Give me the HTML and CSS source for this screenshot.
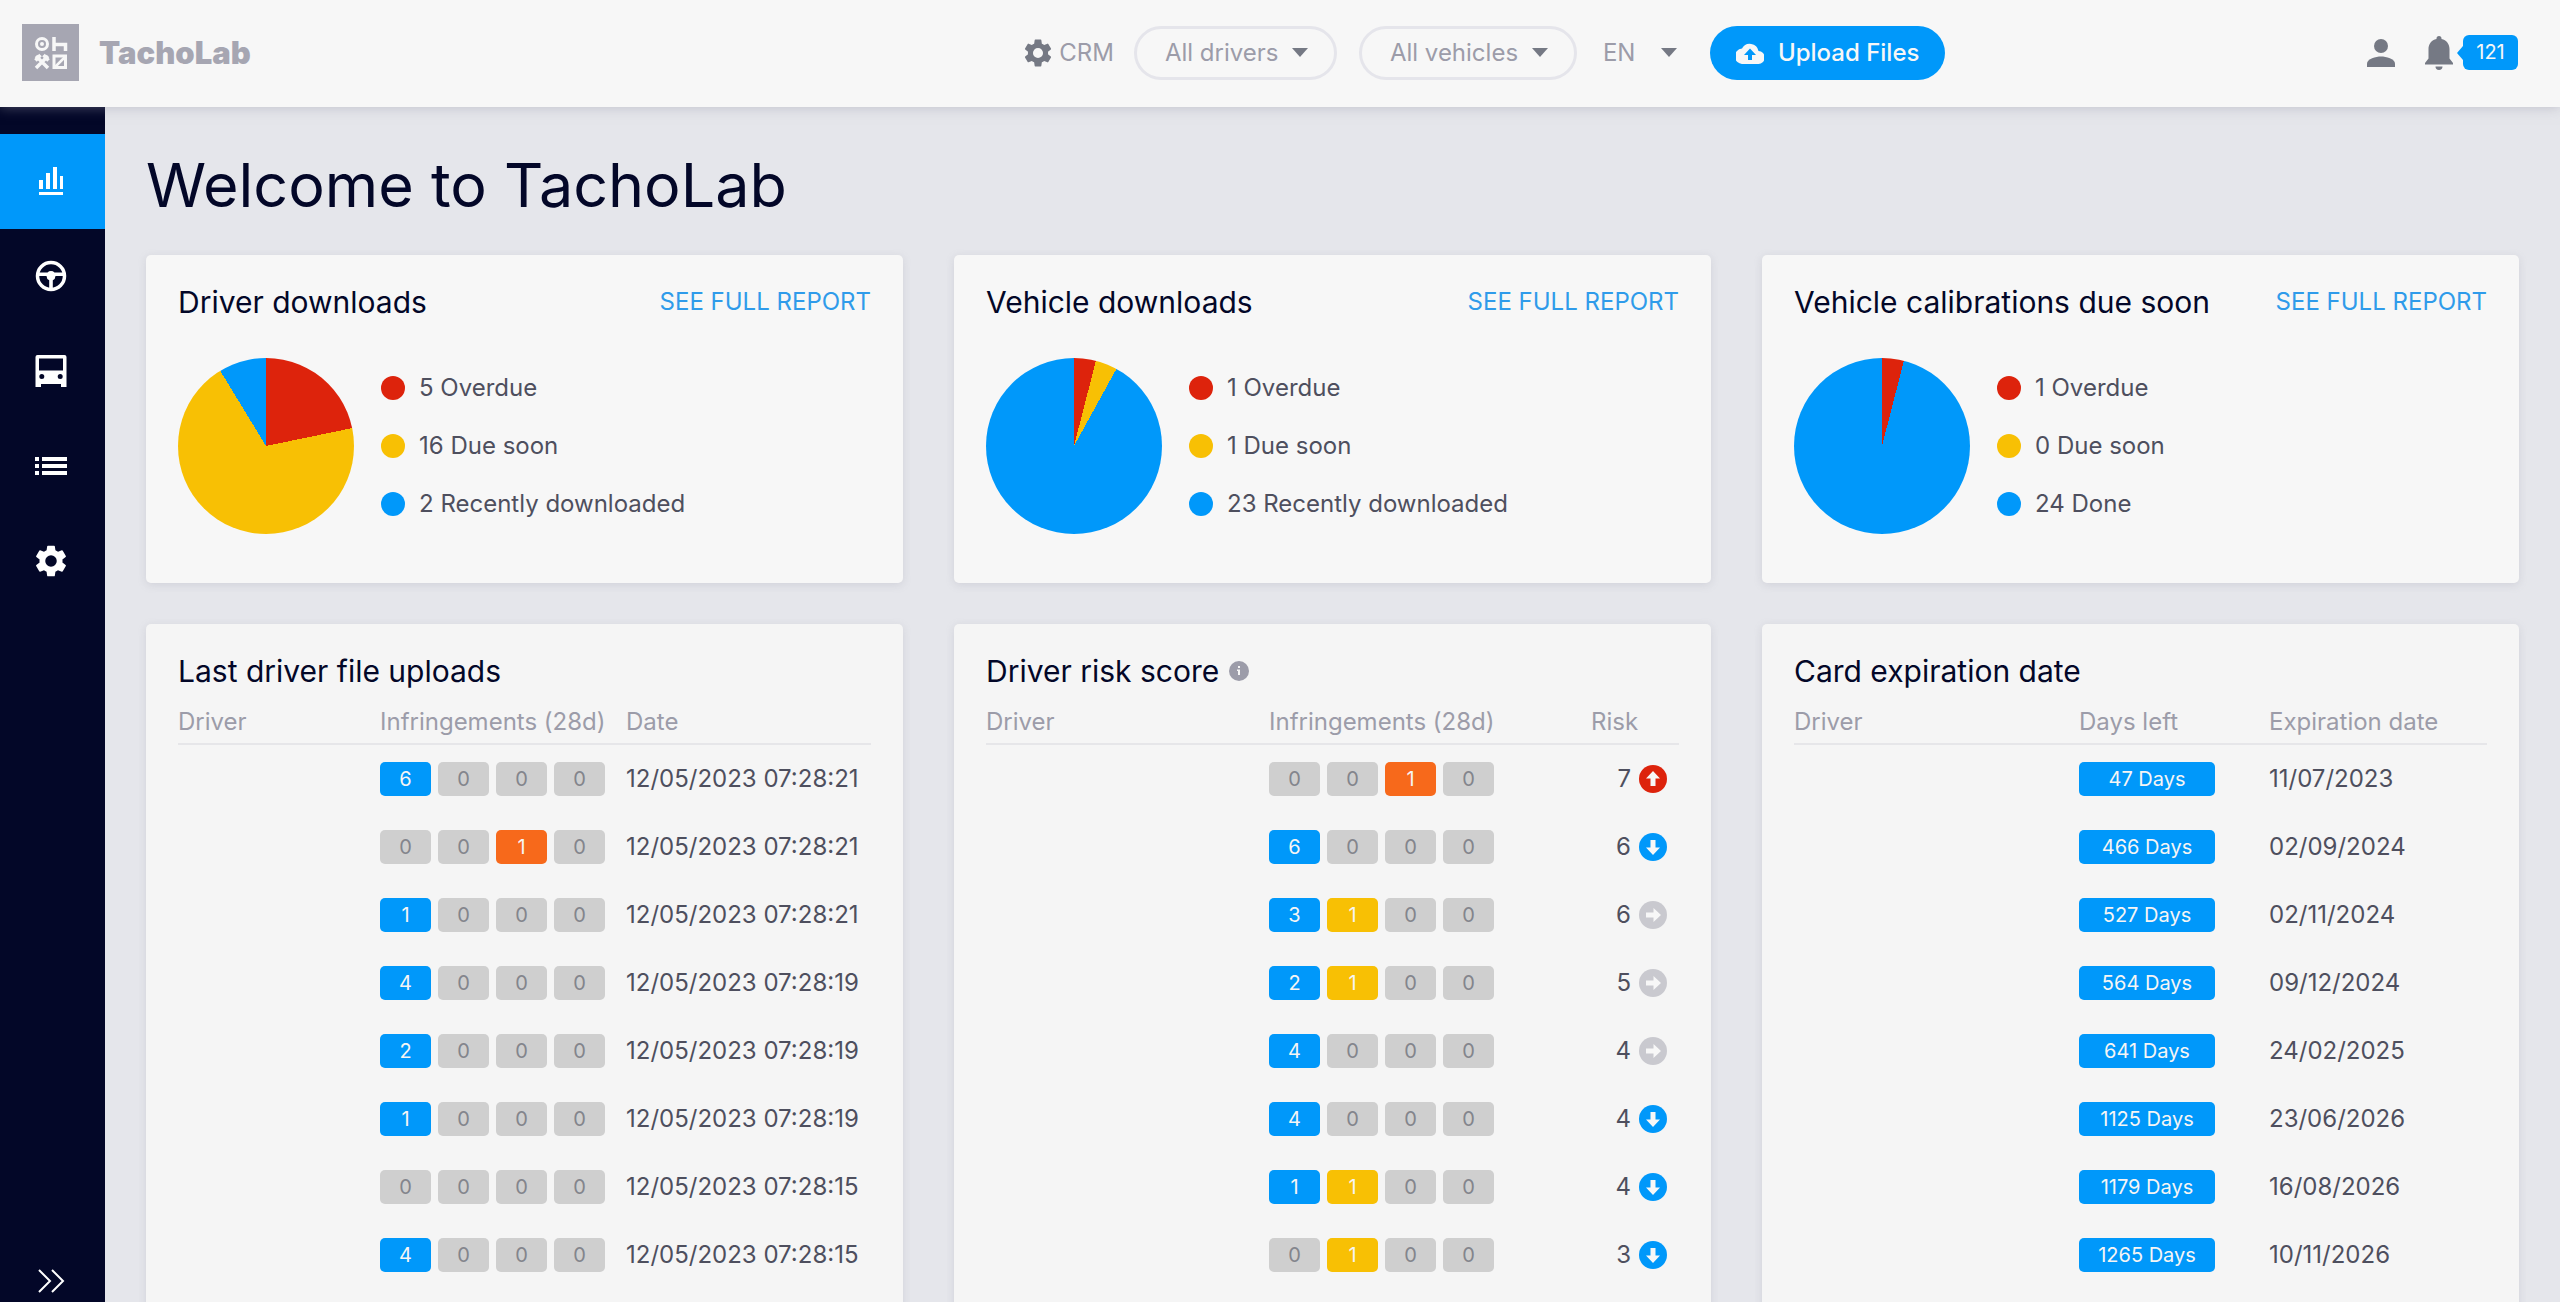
FILE: index.html
```html
<!DOCTYPE html>
<html lang="en">
<head>
<meta charset="utf-8">
<meta name="viewport" content="width=device-width, initial-scale=1">
<title>TachoLab</title>
<link rel="stylesheet" href="styles.css">
</head>
<body>
<svg class="sprite" aria-hidden="true">
  <symbol id="gear" viewBox="2 2 20 20"><path d="M19.14 12.94c.04-.3.06-.61.06-.94s-.02-.64-.07-.94l2.03-1.58a.49.49 0 0 0 .12-.61l-1.92-3.32a.49.49 0 0 0-.59-.22l-2.39.96a7 7 0 0 0-1.62-.94l-.36-2.54a.48.48 0 0 0-.48-.41h-3.84a.48.48 0 0 0-.47.41l-.36 2.54c-.59.24-1.13.57-1.62.94l-2.39-.96a.48.48 0 0 0-.59.22L2.74 8.87a.48.48 0 0 0 .12.61l2.03 1.58c-.05.3-.09.63-.09.94s.02.64.07.94l-2.03 1.58a.49.49 0 0 0-.12.61l1.92 3.32c.12.22.37.29.59.22l2.39-.96c.5.38 1.03.7 1.62.94l.36 2.54c.05.24.24.41.48.41h3.84c.24 0 .44-.17.47-.41l.36-2.54a7 7 0 0 0 1.62-.94l2.39.96c.22.08.47 0 .59-.22l1.92-3.32a.47.47 0 0 0-.12-.61zM12 15.6a3.6 3.6 0 1 1 0-7.2 3.6 3.6 0 0 1 0 7.2z"/></symbol>
  <symbol id="up" viewBox="0 0 28 28"><circle cx="14" cy="14" r="14"/><path fill="#f7f7f7" d="M14 6l7 7.500h-4.500V21h-5v-7.500H7z"/></symbol>
  <symbol id="down" viewBox="0 0 28 28"><circle cx="14" cy="14" r="14"/><path fill="#f7f7f7" d="M14 22l7-7.500h-4.500V7h-5v7.500H7z"/></symbol>
  <symbol id="same" viewBox="0 0 28 28"><circle cx="14" cy="14" r="14"/><path fill="#f7f7f7" d="M22 14l-7.500-7v4.500H7v5h7.500V21z"/></symbol>
</svg>

<header class="topbar">
  <a class="brand" href="#">
    <svg class="brand-mark" viewBox="0 0 57 57" aria-hidden="true">
      <rect width="57" height="57" fill="#a6a6b2"/>
      <g fill="none" stroke="#f7f7f7" stroke-width="3">
        <circle cx="20" cy="20" r="5.500"/>
        <path d="M32 13v14M32 20.500h11.500V27" stroke-width="3.500"/>
        <path d="M14 44l12-12M26 44L14 32M13.500 36.500l5-5.500M26.500 36.500l-5-5.500" stroke-width="3.500"/>
        <rect x="32" y="32" width="11.500" height="11.500"/>
        <path d="M33 43l10-10" stroke-width="2.500"/>
      </g>
      <circle cx="20" cy="20" r="2" fill="#f7f7f7"/>
    </svg>
    <span class="brand-name">TachoLab</span>
  </a>
  <nav class="tools" aria-label="Filters">
    <a class="crm" href="#"><svg class="crm-icon" aria-hidden="true"><use href="#gear"/></svg>CRM</a>
    <select class="filter filter-drivers" aria-label="Drivers"><option>All drivers</option></select>
    <select class="filter filter-vehicles" aria-label="Vehicles"><option>All vehicles</option></select>
    <select class="language" aria-label="Language"><option>EN</option></select>
    <button class="upload" type="button">
      <svg class="upload-icon" viewBox="0 0 28 22" aria-hidden="true"><path fill="#f7f7f7" d="M22.500 9A8.800 8.800 0 0 0 6 6.600 7.700 7.700 0 0 0 7 22h15a6.500 6.500 0 0 0 .5-13z"/><path fill="#0098fa" d="M14 6.500l6 6.500h-4v5h-4v-5H8z"/></svg>
      Upload Files
    </button>
  </nav>
  <div class="account">
    <a class="profile" href="#" aria-label="Profile"><svg class="profile-icon" viewBox="0 0 28 28" aria-hidden="true"><circle cx="14" cy="7" r="7"/><path d="M0 28v-3.500C0 20 9 17.500 14 17.500S28 20 28 24.500V28z"/></svg></a>
    <a class="alerts" href="#" aria-label="Notifications">
      <svg class="bell-icon" viewBox="0 0 28 34" aria-hidden="true"><path d="M14 0a2.500 2.500 0 0 1 2.500 2.500v.4C21.500 4 24.500 8 24.500 13v9.500L28 27v1.500H0V27l3.500-4.500V13c0-5 3-9 8-10.100v-.4A2.500 2.500 0 0 1 14 0z"/><path d="M10.500 30.500h7a3.500 3.500 0 0 1-7 0z"/></svg>
      <span class="alert-count">121</span>
    </a>
  </div>
</header>

<div class="shell">
  <nav class="sidebar" aria-label="Main">
    <a class="side-link active" href="#" aria-label="Dashboard"><svg viewBox="0 0 32 32"><path d="M4 15h4v9H4zM11 8h4v16h-4zM18 2h4v22h-4zM25 11h3v13h-3zM4 27h24v3H4z"/></svg></a>
    <a class="side-link" href="#" aria-label="Drivers"><svg viewBox="0 0 32 32"><circle cx="16" cy="16" r="13.500" fill="none" stroke="#fff" stroke-width="3.500"/><path d="M3 12.500h9.500a5 5 0 0 1 7 0H29V16h-8.500a5 5 0 0 1-2.700 4.300V29h-3.600v-8.700A5 5 0 0 1 11.500 16H3z"/></svg></a>
    <a class="side-link" href="#" aria-label="Vehicles"><svg viewBox="0 0 32 32"><path fill-rule="evenodd" d="M2.500 0h27a2 2 0 0 1 2 2v30h-5.500v-3H6v3H.500V2a2 2 0 0 1 2-2zM4 3.500v12h24v-12zM6.800 19a2.500 2.500 0 1 0 0 5 2.500 2.500 0 0 0 0-5zM25.200 19a2.500 2.500 0 1 0 0 5 2.500 2.500 0 0 0 0-5z"/></svg></a>
    <a class="side-link" href="#" aria-label="Lists"><svg viewBox="0 0 32 32"><path d="M0 7h4v4H0zM7 7h25v4H7zM0 14h4v4H0zM7 14h25v4H7zM0 21h4v4H0zM7 21h25v4H7z"/></svg></a>
    <a class="side-link" href="#" aria-label="Settings"><svg><use href="#gear"/></svg></a>
    <button class="expand" type="button" aria-label="Expand menu"><svg viewBox="0 0 28 24"><path d="M2 1l11 11L2 23M15 1l11 11-11 11" fill="none" stroke="#fff" stroke-width="2"/></svg></button>
  </nav>

  <main class="content">
    <h1>Welcome to TachoLab</h1>
    <div class="cards">
      <section class="card">
        <div class="card-head"><h2>Driver downloads</h2><a class="report" href="#">SEE FULL REPORT</a></div>
        <div class="summary">
          <div class="pie" style="--overdue: 21.74%; --due: 91.3%"></div>
          <ul class="legend"><li class="overdue">5 Overdue</li><li class="due">16 Due soon</li><li class="done">2 Recently downloaded</li></ul>
        </div>
      </section>
      <section class="card">
        <div class="card-head"><h2>Vehicle downloads</h2><a class="report" href="#">SEE FULL REPORT</a></div>
        <div class="summary">
          <div class="pie" style="--overdue: 4%; --due: 8%"></div>
          <ul class="legend"><li class="overdue">1 Overdue</li><li class="due">1 Due soon</li><li class="done">23 Recently downloaded</li></ul>
        </div>
      </section>
      <section class="card">
        <div class="card-head"><h2>Vehicle calibrations due soon</h2><a class="report" href="#">SEE FULL REPORT</a></div>
        <div class="summary">
          <div class="pie" style="--overdue: 4%; --due: 4%"></div>
          <ul class="legend"><li class="overdue">1 Overdue</li><li class="due">0 Due soon</li><li class="done">24 Done</li></ul>
        </div>
      </section>

      <section class="card table-card">
        <div class="card-head"><h2>Last driver file uploads</h2></div>
        <table class="uploads">
          <thead><tr><th>Driver</th><th>Infringements (28d)</th><th>Date</th></tr></thead>
          <tbody>
            <tr><td></td><td><div class="chips"><span class="chip blue">6</span><span class="chip">0</span><span class="chip">0</span><span class="chip">0</span></div></td><td>12/05/2023 07:28:21</td></tr>
            <tr><td></td><td><div class="chips"><span class="chip">0</span><span class="chip">0</span><span class="chip orange">1</span><span class="chip">0</span></div></td><td>12/05/2023 07:28:21</td></tr>
            <tr><td></td><td><div class="chips"><span class="chip blue">1</span><span class="chip">0</span><span class="chip">0</span><span class="chip">0</span></div></td><td>12/05/2023 07:28:21</td></tr>
            <tr><td></td><td><div class="chips"><span class="chip blue">4</span><span class="chip">0</span><span class="chip">0</span><span class="chip">0</span></div></td><td>12/05/2023 07:28:19</td></tr>
            <tr><td></td><td><div class="chips"><span class="chip blue">2</span><span class="chip">0</span><span class="chip">0</span><span class="chip">0</span></div></td><td>12/05/2023 07:28:19</td></tr>
            <tr><td></td><td><div class="chips"><span class="chip blue">1</span><span class="chip">0</span><span class="chip">0</span><span class="chip">0</span></div></td><td>12/05/2023 07:28:19</td></tr>
            <tr><td></td><td><div class="chips"><span class="chip">0</span><span class="chip">0</span><span class="chip">0</span><span class="chip">0</span></div></td><td>12/05/2023 07:28:15</td></tr>
            <tr><td></td><td><div class="chips"><span class="chip blue">4</span><span class="chip">0</span><span class="chip">0</span><span class="chip">0</span></div></td><td>12/05/2023 07:28:15</td></tr>
          </tbody>
        </table>
      </section>

      <section class="card table-card">
        <div class="card-head"><h2>Driver risk score</h2><svg class="info" viewBox="0 0 20 20" aria-hidden="true"><circle cx="10" cy="10" r="10" fill="#9c9ca9"/><path d="M9 5h2v2H9zM8 8.500h3V14H9v-4H8z" fill="#f5f5f5"/></svg></div>
        <table class="risks">
          <thead><tr><th>Driver</th><th>Infringements (28d)</th><th>Risk</th></tr></thead>
          <tbody>
            <tr><td></td><td><div class="chips"><span class="chip">0</span><span class="chip">0</span><span class="chip orange">1</span><span class="chip">0</span></div></td><td><div class="risk">7<svg class="trend trend-up"><use href="#up"/></svg></div></td></tr>
            <tr><td></td><td><div class="chips"><span class="chip blue">6</span><span class="chip">0</span><span class="chip">0</span><span class="chip">0</span></div></td><td><div class="risk">6<svg class="trend trend-down"><use href="#down"/></svg></div></td></tr>
            <tr><td></td><td><div class="chips"><span class="chip blue">3</span><span class="chip yellow">1</span><span class="chip">0</span><span class="chip">0</span></div></td><td><div class="risk">6<svg class="trend"><use href="#same"/></svg></div></td></tr>
            <tr><td></td><td><div class="chips"><span class="chip blue">2</span><span class="chip yellow">1</span><span class="chip">0</span><span class="chip">0</span></div></td><td><div class="risk">5<svg class="trend"><use href="#same"/></svg></div></td></tr>
            <tr><td></td><td><div class="chips"><span class="chip blue">4</span><span class="chip">0</span><span class="chip">0</span><span class="chip">0</span></div></td><td><div class="risk">4<svg class="trend"><use href="#same"/></svg></div></td></tr>
            <tr><td></td><td><div class="chips"><span class="chip blue">4</span><span class="chip">0</span><span class="chip">0</span><span class="chip">0</span></div></td><td><div class="risk">4<svg class="trend trend-down"><use href="#down"/></svg></div></td></tr>
            <tr><td></td><td><div class="chips"><span class="chip blue">1</span><span class="chip yellow">1</span><span class="chip">0</span><span class="chip">0</span></div></td><td><div class="risk">4<svg class="trend trend-down"><use href="#down"/></svg></div></td></tr>
            <tr><td></td><td><div class="chips"><span class="chip">0</span><span class="chip yellow">1</span><span class="chip">0</span><span class="chip">0</span></div></td><td><div class="risk">3<svg class="trend trend-down"><use href="#down"/></svg></div></td></tr>
          </tbody>
        </table>
      </section>

      <section class="card table-card">
        <div class="card-head"><h2>Card expiration date</h2></div>
        <table class="expirations">
          <thead><tr><th>Driver</th><th>Days left</th><th>Expiration date</th></tr></thead>
          <tbody>
            <tr><td></td><td><span class="chip days blue">47 Days</span></td><td>11/07/2023</td></tr>
            <tr><td></td><td><span class="chip days blue">466 Days</span></td><td>02/09/2024</td></tr>
            <tr><td></td><td><span class="chip days blue">527 Days</span></td><td>02/11/2024</td></tr>
            <tr><td></td><td><span class="chip days blue">564 Days</span></td><td>09/12/2024</td></tr>
            <tr><td></td><td><span class="chip days blue">641 Days</span></td><td>24/02/2025</td></tr>
            <tr><td></td><td><span class="chip days blue">1125 Days</span></td><td>23/06/2026</td></tr>
            <tr><td></td><td><span class="chip days blue">1179 Days</span></td><td>16/08/2026</td></tr>
            <tr><td></td><td><span class="chip days blue">1265 Days</span></td><td>10/11/2026</td></tr>
          </tbody>
        </table>
      </section>
    </div>
  </main>
</div>
</body>
</html>
```

FILE: styles.css
```css
:root {
  --navy: #030728;
  --blue: #0098fa;
  --red: #dd230c;
  --yellow: #f8c004;
  --muted: #9c9ca9;
  --text: #4e4f5e;
  --icon: #757984;
}

* { box-sizing: border-box; }

body {
  margin: 0;
  height: 100vh;
  display: flex;
  flex-direction: column;
  overflow: hidden;
  background: #e5e6eb;
  color: var(--text);
  font: 400 24px/28px Inter, "Liberation Sans", sans-serif;
}

a { color: inherit; text-decoration: none; }
svg { display: block; flex: none; }
button, select { font: inherit; cursor: pointer; }
.sprite { position: absolute; width: 0; height: 0; }

/* Top bar */
.topbar {
  position: relative;
  z-index: 1;
  flex: none;
  display: grid;
  grid-template-columns: 5fr auto 3fr;
  align-items: center;
  height: 107px;
  padding-bottom: 2px;
  background: #f7f7f7;
  box-shadow: 0 0 12px rgba(150, 150, 165, .5);
  color: var(--muted);
}
.brand { display: flex; align-items: center; gap: 20px; padding-left: 22px; }
.brand-mark { width: 57px; height: 57px; }
.brand-name { color: #a6a6b2; font-size: 31px; font-weight: 900; }
.tools { display: flex; align-items: center; }
.crm { display: flex; align-items: center; gap: 7px; margin-right: 20px; }
.crm-icon { width: 28px; height: 28px; fill: var(--icon); }
.filter, .language {
  height: 54px;
  padding: 0 0 0 28px;
  appearance: none;
  color: var(--muted);
  border: 3px solid #e5e5eb;
  border-radius: 27px;
  background: url("data:image/svg+xml,%3Csvg xmlns='http://www.w3.org/2000/svg' width='16' height='9'%3E%3Cpath d='M0 0h16L8 9z' fill='%23757984'/%3E%3C/svg%3E") no-repeat right 26px center;
}
.filter { margin-right: 22px; }
.filter-drivers { width: 203px; }
.filter-vehicles { width: 218px; }
.language { width: 74px; padding: 0; margin: 0 33px 0 4px; border: 0; border-radius: 0; background-position: right center; }
.upload {
  display: flex;
  align-items: center;
  gap: 14px;
  height: 54px;
  padding: 0 26px;
  border: 0;
  border-radius: 27px;
  background: var(--blue);
  color: #f7f7f7;
  font-weight: 500;
}
.upload-icon { width: 28px; height: 22px; }
.account { display: flex; align-items: center; justify-content: flex-end; gap: 30px; padding-right: 42px; }
.profile-icon { width: 28px; height: 28px; fill: var(--icon); }
.alerts { display: flex; align-items: center; gap: 10px; }
.bell-icon { width: 28px; height: 34px; fill: var(--icon); }
.alert-count {
  position: relative;
  width: 55px;
  border-radius: 6px;
  background: var(--blue);
  color: #f7f7f7;
  font-size: 20px;
  line-height: 35px;
  text-align: center;
}
.alert-count::before {
  content: "";
  position: absolute;
  left: -6px;
  top: 11px;
  border: solid transparent;
  border-width: 7px 6px 7px 0;
  border-right-color: var(--blue);
}

/* Sidebar */
.shell { flex: 1; min-height: 0; display: flex; }
.sidebar { flex: none; display: flex; flex-direction: column; width: 105px; padding-top: 27px; background: var(--navy); }
.side-link { display: flex; align-items: center; justify-content: center; height: 95px; padding: 0 3px 2px 0; }
.side-link svg { width: 32px; height: 32px; fill: #fff; }
.side-link.active { background: var(--blue); }
.expand { margin: auto 0 0; padding: 0 3px 9px 0; border: 0; background: none; display: flex; justify-content: center; }
.expand svg { width: 28px; height: 24px; }

/* Content */
.content { flex: 1; min-width: 0; overflow: auto; scrollbar-width: none; padding: 40px 41px; }
h1 { margin: 0 0 32px; color: var(--navy); font-size: 61px; font-weight: 400; line-height: 76px; }
.cards { display: grid; grid-template-columns: repeat(3, minmax(0, 1fr)); gap: 41px 51px; }
.card { padding: 27px 32px 49px; border-radius: 5px; background: #f7f7f7; box-shadow: 0 2px 8px rgba(130, 130, 150, .2); }
.table-card { background: #f5f5f5; }
.card-head { display: flex; align-items: center; gap: 10px; }
h2 { margin: 0; color: var(--navy); font-size: 30px; font-weight: 400; line-height: 40px; }
.report { margin-left: auto; color: #2f9bea; }
.info { width: 20px; height: 20px; }

.summary { display: flex; align-items: center; gap: 27px; margin-top: 36px; }
.pie {
  width: 176px;
  height: 176px;
  border-radius: 50%;
  background: conic-gradient(var(--red) var(--overdue), var(--yellow) 0 var(--due), var(--blue) 0);
}
.legend { display: grid; gap: 30px; margin: 0; padding: 0; list-style: none; }
.legend li { display: flex; align-items: center; gap: 14px; }
.legend li::before { content: ""; width: 24px; height: 24px; border-radius: 50%; }
.overdue::before { background: var(--red); }
.due::before { background: var(--yellow); }
.done::before { background: var(--blue); }

/* Tables */
table { width: 100%; table-layout: fixed; border-collapse: separate; border-spacing: 0; }
th { padding: 17px 0 7px; border-bottom: 2px solid #e6e6e9; color: var(--muted); font-weight: 400; text-align: left; white-space: nowrap; }
td { height: 68px; padding: 0; white-space: nowrap; }
.uploads th:nth-child(1) { width: 202px; }
.uploads th:nth-child(2) { width: 246px; }
.risks th:nth-child(1) { width: 283px; }
.risks th:nth-child(2) { width: 322px; }
.expirations th:nth-child(1) { width: 285px; }
.expirations th:nth-child(2) { width: 190px; }
.chips { display: flex; gap: 7px; }
.chip { width: 51px; border-radius: 5px; background: #cfcfcf; color: #83858c; font-size: 20px; line-height: 34px; text-align: center; }
.days { display: block; width: 136px; }
.blue { background: var(--blue); color: #f5f5f5; }
.orange { background: #f7691b; color: #f5f5f5; }
.yellow { background: var(--yellow); color: #f5f5f5; }
.risk { display: flex; align-items: center; justify-content: flex-end; gap: 8px; padding-right: 12px; }
.trend { width: 28px; height: 28px; fill: #c9c9cf; }
.trend-up { fill: var(--red); }
.trend-down { fill: var(--blue); }
```
